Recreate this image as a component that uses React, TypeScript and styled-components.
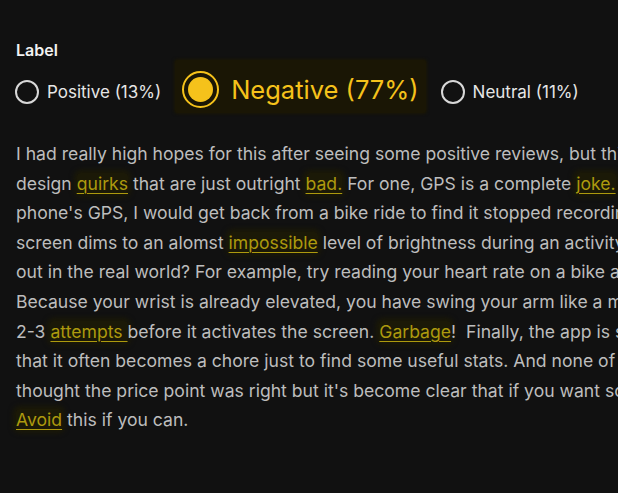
import styled, { createGlobalStyle } from 'styled-components'

const GlobalStyle = createGlobalStyle`
    html, body {
        margin: 0;
        padding: 0;
        background: #111111;
    }
    body {
        width: 618px;
        height: 493px;
        overflow: hidden;
        font-family: Inter, "Noto Sans", sans-serif;
    }
`

const Page = styled.main`
    padding: 40px 0 0 16px;
    color: #bdbdbd;
`

const Heading = styled.div`
    font-size: 16px;
    font-weight: 600;
    color: #f2f2f2;
    line-height: 20px;
`

const Options = styled.div`
    display: flex;
    align-items: center;
    height: 53px;
    margin-left: -1px;
`

const Option = styled.label<{ $active?: boolean }>`
    display: flex;
    align-items: center;
    align-self: ${(p) => (p.$active ? 'stretch' : 'center')};
    gap: ${(p) => (p.$active ? '12px' : '8px')};
    font-size: ${(p) => (p.$active ? '25.5px' : '17px')};
    color: ${(p) => (p.$active ? '#f5c21b' : '#e6e6e6')};
    margin: ${(p) => (p.$active ? '0 15px 0 -1px' : '11px 15px 0 0')};
    padding: ${(p) => (p.$active ? '5px 7px 0 7px' : '0')};
    background: ${(p) => (p.$active ? '#1a1605' : 'transparent')};
    box-shadow: ${(p) => (p.$active ? '0 0 3px 1px #1a1605' : 'none')};
    border-radius: 3px;
`

const Radio = styled.span<{ $active?: boolean }>`
    box-sizing: border-box;
    display: inline-block;
    flex: none;
    width: ${(p) => (p.$active ? '37px' : '24px')};
    height: ${(p) => (p.$active ? '37px' : '24px')};
    border-radius: 50%;
    border: 2px solid ${(p) => (p.$active ? '#f5c21b' : '#d8d8d8')};
    position: relative;

    &::after {
        content: '';
        display: ${(p) => (p.$active ? 'block' : 'none')};
        position: absolute;
        inset: 4px;
        border-radius: 50%;
        background: #f5c21b;
    }
`

const Review = styled.p`
    margin: 26px 0 0;
    font-size: 17.6px;
    line-height: 29.6px;
    white-space: nowrap;
`

const Mark = styled.span`
    color: #ad9a0e;
    text-decoration: underline;
    text-underline-offset: 3px;
    text-decoration-thickness: 1px;
    background: #1b1907;
    box-shadow: 0 0 5px 3px #1b1907;
    border-radius: 4px;
`

const options = [
    { label: 'Positive (13%)' },
    { label: 'Negative (77%)', active: true },
    { label: 'Neutral (11%)' },
]

export default function App() {
    return (
        <>
            <GlobalStyle />
            <Page>
                <Heading>Label</Heading>
                <Options>
                    {options.map((o) => (
                        <Option key={o.label} $active={o.active}>
                            <Radio $active={o.active} />
                            {o.label}
                        </Option>
                    ))}
                </Options>
                <Review>
                    I had really high hopes for this after seeing some positive reviews, but this watch has some<br />
                    design <Mark>quirks</Mark> that are just outright <Mark>bad.</Mark> For one, GPS is a complete <Mark>joke.</Mark> Even when connected to my<br />
                    phone's GPS, I would get back from a bike ride to find it stopped recording halfway through. The<br />
                    screen dims to an alomst <Mark>impossible</Mark> level of brightness during an activity. Who thought this would work<br />
                    out in the real world? For example, try reading your heart rate on a bike at noon in the sun.<br />
                    Because your wrist is already elevated, you have swing your arm like a maniac, taking<br />
                    2-3 <Mark>attempts </Mark>before it activates the screen. <Mark>Garbage</Mark>!&nbsp; Finally, the app is so poorly designed<br />
                    that it often becomes a chore just to find some useful stats. And none of it syncs properly. I<br />
                    thought the price point was right but it's become clear that if you want something good, pay more.<br />
                    <Mark>Avoid</Mark> this if you can.
                </Review>
            </Page>
        </>
    )
}
